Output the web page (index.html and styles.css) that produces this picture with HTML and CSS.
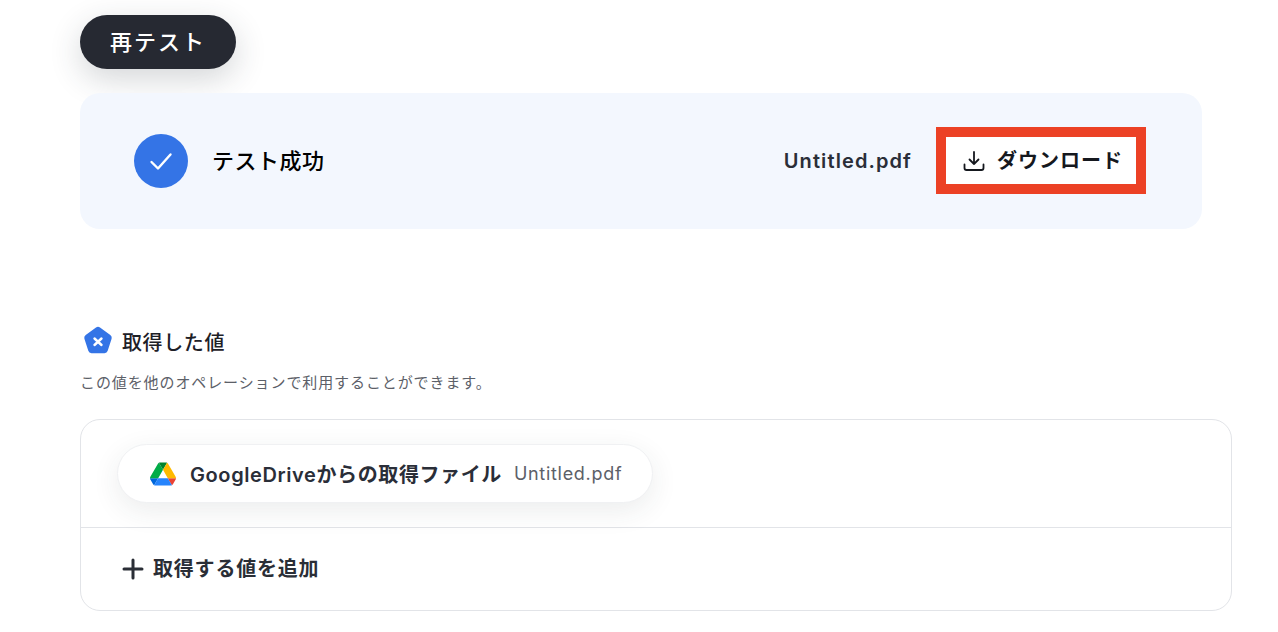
FILE: index.html
```html
<!DOCTYPE html>
<html lang="ja">
<head>
    <meta charset="UTF-8">
    <meta name="viewport" content="width=device-width, initial-scale=1.0">
    <title>テスト</title>
    <link rel="stylesheet" href="styles.css">
</head>
<body>
    <div class="page">
        <button class="retest">再テスト</button>

        <div class="result">
            <div class="check">
                <svg width="24" height="24" viewBox="0 0 24 24" fill="none" stroke="#fff" stroke-width="2.400" stroke-linecap="round" stroke-linejoin="round"><path d="M2.500 13 9 19.500 21.500 5.500"/></svg>
            </div>
            <div class="resultTitle">テスト成功</div>
            <div class="fileName">Untitled.pdf</div>
            <div class="download">
                <svg width="24" height="24" viewBox="0 0 24 24" fill="none" stroke="#15181e" stroke-width="1.800" stroke-linecap="round" stroke-linejoin="round"><path d="M12 3v12M7.500 10.500 12 15l4.500-4.500"/><path d="M2.500 15.500v3.500a2 2 0 0 0 2 2h15a2 2 0 0 0 2-2v-3.500"/></svg>
                <span class="downloadLabel">ダウンロード</span>
            </div>
        </div>

        <div class="valuesHead">
            <svg width="32" height="32" viewBox="0 0 32 32"><path d="M14 2.600a3.400 3.400 0 0 1 4 0l10.300 7.300a3.400 3.400 0 0 1 1.300 3.800l-3.900 12.100a3.400 3.400 0 0 1-3.200 2.400H9.500a3.400 3.400 0 0 1-3.200-2.400L2.400 13.700a3.400 3.400 0 0 1 1.300-3.800z" fill="#3474e6"/><path d="M12.500 13.500l7 6.500M19.500 13.500l-7 6.500" stroke="#fff" stroke-width="2.400" stroke-linecap="round"/></svg>
            <h2>取得した値</h2>
        </div>
        <p class="valuesNote">この値を他のオペレーションで利用することができます。</p>

        <div class="valuesBox">
            <div class="pillRow">
                <div class="pill">
                    <svg width="26" height="24" viewBox="0 0 87.300 78"><path d="m6.600 66.850 3.850 6.650c.8 1.400 1.950 2.500 3.300 3.300l13.750-23.800H0c0 1.550.4 3.100 1.200 4.500z" fill="#0066da"/><path d="M43.650 25 29.900 1.200c-1.350.8-2.500 1.900-3.300 3.300L1.200 48.500A9.060 9.060 0 0 0 0 53h27.500z" fill="#00ac47"/><path d="M73.550 76.800c1.350-.8 2.500-1.900 3.300-3.300l1.600-2.750 7.650-13.250c.8-1.400 1.200-2.950 1.200-4.500H59.800l5.850 11.500z" fill="#ea4335"/><path d="M43.650 25 57.400 1.200C56.050.4 54.500 0 52.900 0H34.400c-1.600 0-3.150.45-4.500 1.200z" fill="#00832d"/><path d="M59.800 53H27.500L13.750 76.800c1.350.8 2.900 1.200 4.500 1.200h50.800c1.600 0 3.150-.45 4.500-1.200z" fill="#2684fc"/><path d="M73.400 26.500 60.700 4.500c-.8-1.400-1.950-2.500-3.300-3.300L43.650 25 59.800 53h27.450c0-1.550-.4-3.100-1.200-4.500z" fill="#ffba00"/></svg>
                    <span class="pillName">GoogleDriveからの取得ファイル</span>
                    <span class="pillValue">Untitled.pdf</span>
                </div>
            </div>
            <div class="addRow">
                <svg width="22" height="22" viewBox="0 0 22 22" fill="none" stroke="#2a2e36" stroke-width="3" stroke-linecap="round"><path d="M11 2v18M2 11h18"/></svg>
                <span class="addLabel">取得する値を追加</span>
            </div>
        </div>
    </div>
</body>
</html>
```

FILE: styles.css
```css
html{
    background-color: #fff;
}
body{
    margin: 0;
    font-family: Inter, "Noto Sans CJK JP", sans-serif;
    overflow: hidden;
}
.page{
    padding: 15px 46px 0 80px;
}
.retest{
    display: block;
    width: 156px;
    height: 54px;
    padding: 0 0 4px;
    border: none;
    border-radius: 27px;
    background-color: #262932;
    color: #fff;
    font-family: inherit;
    font-size: 22px;
    font-weight: 500;
    letter-spacing: 2px;
    box-shadow: 0 10px 32px rgba(40, 50, 60, 0.2);
}
.result{
    display: flex;
    align-items: center;
    width: 1122px;
    height: 136px;
    box-sizing: border-box;
    margin-top: 24px;
    padding: 0 56px 0 54px;
    border-radius: 20px;
    background-color: #f3f7fe;
}
.check{
    display: flex;
    align-items: center;
    justify-content: center;
    width: 54px;
    height: 54px;
    border-radius: 50%;
    background-color: #3474e6;
}
.resultTitle{
    margin-left: 24px;
    padding-bottom: 5px;
    font-size: 22px;
    font-weight: 500;
    letter-spacing: 0.5px;
    color: #000;
}
.fileName{
    margin-left: auto;
    font-size: 20px;
    font-weight: 600;
    letter-spacing: 1.1px;
    color: #2a2e38;
}
.download{
    display: flex;
    align-items: center;
    gap: 11px;
    width: 210px;
    height: 67px;
    box-sizing: border-box;
    margin: 0 0 1px 24px;
    padding-left: 16px;
    border: 10px solid #ec4125;
    background-color: #fff;
    font-size: 20px;
    font-weight: 600;
    letter-spacing: 1px;
    color: #15181e;
}
.downloadLabel{
    padding-bottom: 3px;
}
.valuesHead{
    display: flex;
    align-items: center;
    gap: 8px;
    margin: 96px 0 0 2px;
}
.valuesHead h2{
    margin: 0;
    font-size: 20px;
    font-weight: 500;
    letter-spacing: 0.6px;
    color: #1d2027;
}
.valuesNote{
    margin: 15px 0 0;
    font-size: 15px;
    line-height: 22px;
    letter-spacing: 0.9px;
    color: #5c6068;
}
.valuesBox{
    width: 1152px;
    height: 192px;
    box-sizing: border-box;
    margin-top: 25px;
    border: 1px solid #e2e4e8;
    border-radius: 20px;
}
.pillRow{
    height: 108px;
    box-sizing: border-box;
    padding: 24px 0 0 36px;
    border-bottom: 1px solid #e2e4e8;
}
.pill{
    display: inline-flex;
    align-items: center;
    height: 59px;
    box-sizing: border-box;
    padding: 0 30px 0 32px;
    border: 1px solid #f0f1f3;
    border-radius: 30px;
    background-color: #fff;
    box-shadow: 0 8px 28px rgba(40, 50, 60, 0.09);
}
.pillName{
    margin-left: 14px;
    font-size: 20px;
    font-weight: 600;
    letter-spacing: 0.6px;
    color: #2a2e38;
}
.pillValue{
    margin-left: 12px;
    font-size: 18px;
    letter-spacing: 0.7px;
    color: #5c6068;
}
.addRow{
    display: flex;
    align-items: center;
    gap: 9px;
    height: 81px;
    padding-left: 41px;
    font-size: 20px;
    font-weight: 600;
    letter-spacing: 0.8px;
    color: #2a2e36;
}
.addLabel{
    padding-bottom: 2px;
}
```
